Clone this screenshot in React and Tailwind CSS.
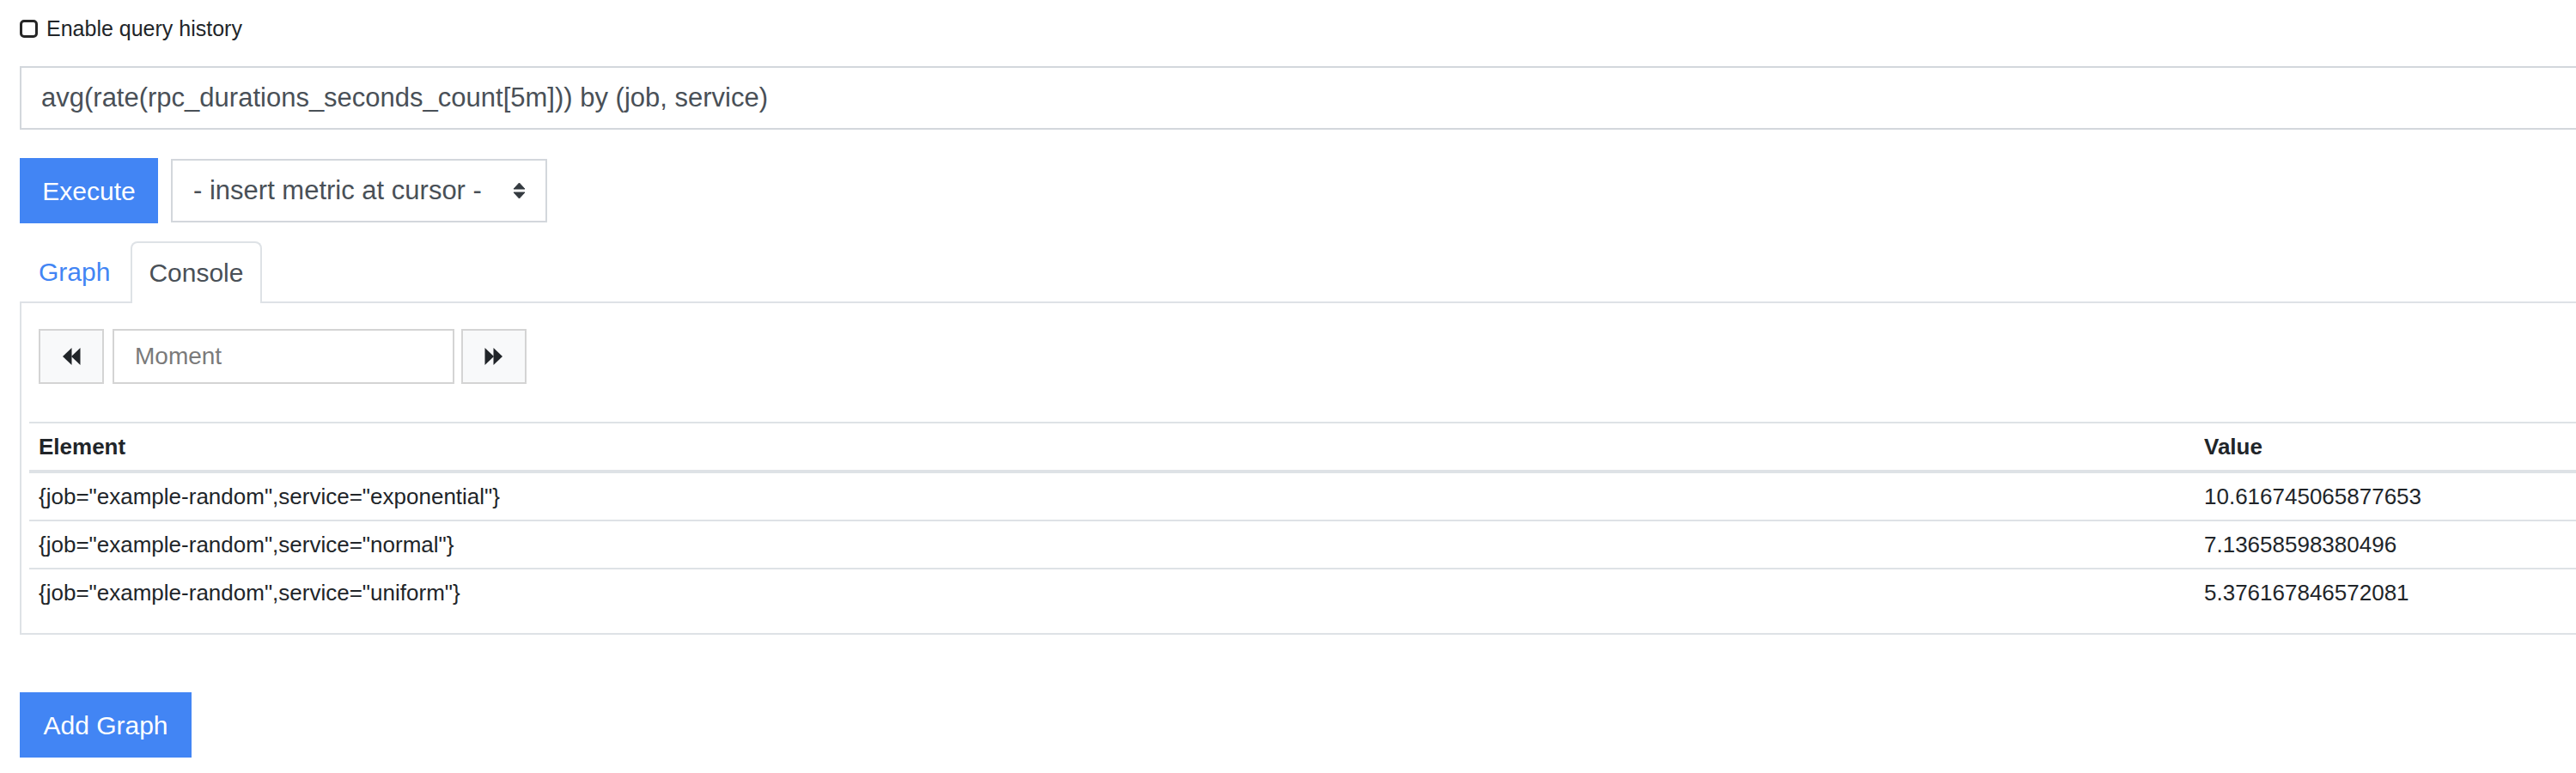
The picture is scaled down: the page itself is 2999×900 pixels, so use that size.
import React from "react";

// query console (Prometheus-style expression browser), rendered at 2x scale
const rows = [
  { metric: '{job="example-random",service="exponential"}', value: "10.616745065877653" },
  { metric: '{job="example-random",service="normal"}', value: "7.13658598380496" },
  { metric: '{job="example-random",service="uniform"}', value: "5.376167846572081" },
];

function SortArrows() {
  return (
    <svg width="15" height="20" viewBox="0 0 15 20" className="text-[#343a40]">
      <path d="M7.5 1 L14 8 L1 8 Z" fill="currentColor" strokeLinejoin="round" stroke="currentColor" strokeWidth="1" />
      <path d="M1 12 L14 12 L7.5 19 Z" fill="currentColor" strokeLinejoin="round" stroke="currentColor" strokeWidth="1" />
    </svg>
  );
}

function Backward() {
  return (
    <svg width="22" height="22" viewBox="0 0 22 22" className="text-[#212529]">
      <path d="M11.5 1 L1 11 L11.5 21 Z" fill="currentColor" />
      <path d="M21.5 1 L11 11 L21.5 21 Z" fill="currentColor" />
    </svg>
  );
}

function Forward() {
  return (
    <svg width="22" height="22" viewBox="0 0 22 22" className="text-[#212529]">
      <path d="M0.5 1 L11 11 L0.5 21 Z" fill="currentColor" />
      <path d="M10.5 1 L21 11 L10.5 21 Z" fill="currentColor" />
    </svg>
  );
}

export default function App() {
  return (
    <div className="h-[900px] w-full overflow-hidden bg-white text-[#212529] font-['Liberation_Sans',Arial,sans-serif]">
      <div className="w-[3040px] pl-[23px]">
        {/* history toggle */}
        <label className="mt-[21px] flex h-[24px] items-center gap-[10px] text-[25px] leading-none">
          <span className="h-[21px] w-[21px] rounded-[5px] border-[3px] border-[#262626] bg-white" />
          Enable query history
        </label>

        {/* expression input */}
        <div className="mt-[32px] flex h-[74px] items-center border-2 border-[#d3d7dc] pl-[23px] text-[31px] text-[#495057]">
          avg(rate(rpc_durations_seconds_count[5m])) by (job, service)
        </div>

        {/* execute + metric select */}
        <div className="mt-[33px] flex h-[76px] items-center gap-[15px]">
          <button className="h-[76px] w-[161px] bg-[#4285f4] text-[30px] text-white">Execute</button>
          <div className="flex h-[74px] w-[438px] items-center justify-between border-2 border-[#d3d7dc] pl-[24px] pr-[23px] text-[31px] text-[#495057]">
            <span>- insert metric at cursor -</span>
            <SortArrows />
          </div>
        </div>

        {/* tabs */}
        <div className="mt-[21px] flex h-[72px] items-end border-b-2 border-[#dee2e6] text-[30px]">
          <div className="flex h-[70px] items-center pl-[22px] pr-[24px] text-[#4285f4]">Graph</div>
          <div className="relative -mb-[2px] flex h-[72px] items-center rounded-t-[8px] border-2 border-b-0 border-[#dee2e6] bg-white pb-[2px] pl-[19px] pr-[20px] text-[#495057]">
            Console
          </div>
        </div>

        {/* console panel */}
        <div className="h-[386px] border-2 border-t-0 border-[#dee2e6] pt-[30px]">
          <div className="ml-[20px] flex h-[64px] items-center">
            <button className="flex h-[64px] w-[76px] items-center justify-center border-2 border-[#d4d4d4] bg-[#f8f9fa]">
              <Backward />
            </button>
            <div className="ml-[10px] flex h-[64px] w-[398px] items-center border-2 border-[#d4d4d4] pl-[24px] text-[28px] text-[#7a7a7a]">
              Moment
            </div>
            <button className="ml-[8px] flex h-[64px] w-[76px] items-center justify-center border-2 border-[#d4d4d4] bg-[#f8f9fa]">
              <Forward />
            </button>
          </div>

          <div className="ml-[9px] mt-[44px] w-[2996px] text-[26px]">
            <div className="flex h-[60px] items-center border-y-2 border-b-4 border-[#dee2e6] font-bold">
              <div className="w-[2521px] px-[11px]">Element</div>
              <div className="px-[11px]">Value</div>
            </div>
            {rows.map((r, i) => (
              <div
                key={r.metric}
                className={i === 0 ? "flex h-[54px] items-center" : "flex h-[56px] items-center border-t-2 border-[#dee2e6]"}
              >
                <div className="w-[2521px] px-[11px]">{r.metric}</div>
                <div className="px-[11px]">{r.value}</div>
              </div>
            ))}
          </div>
        </div>

        <button className="mt-[67px] h-[76px] w-[200px] bg-[#4285f4] text-[30px] text-white">Add Graph</button>
      </div>
    </div>
  );
}
